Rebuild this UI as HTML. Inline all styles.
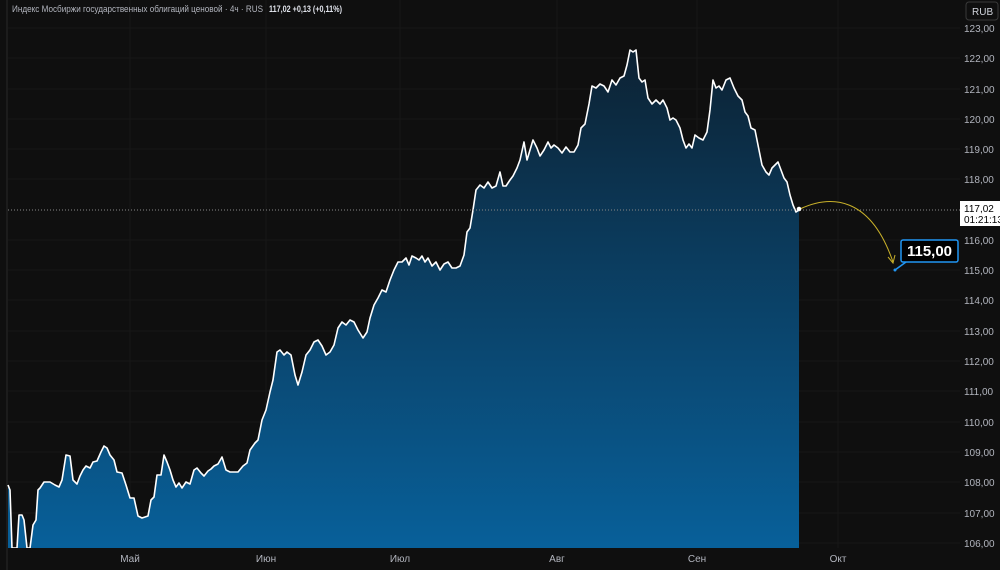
<!DOCTYPE html>
<html><head><meta charset="utf-8"><style>
body{margin:0;background:#0f0f0f;width:1000px;height:570px;overflow:hidden;font-family:"Liberation Sans",sans-serif}
svg{position:absolute;left:0;top:0}
</style></head><body>
<svg width="1000" height="570" viewBox="0 0 1000 570">
<defs><linearGradient id="g" x1="0" y1="0" x2="0" y2="1">
<stop offset="0" stop-color="#0d2233"/><stop offset="1" stop-color="#08609a"/></linearGradient></defs>
<rect x="0" y="0" width="1000" height="570" fill="#0f0f0f"/>
<rect x="6.5" y="0" width="1" height="570" fill="#2a2a2a"/>
<g stroke="#171717" stroke-width="1">
<line x1="8" y1="28" x2="960" y2="28"/><line x1="8" y1="58" x2="960" y2="58"/><line x1="8" y1="89" x2="960" y2="89"/><line x1="8" y1="119" x2="960" y2="119"/><line x1="8" y1="149" x2="960" y2="149"/><line x1="8" y1="179" x2="960" y2="179"/><line x1="8" y1="240" x2="960" y2="240"/><line x1="8" y1="270" x2="960" y2="270"/><line x1="8" y1="300" x2="960" y2="300"/><line x1="8" y1="331" x2="960" y2="331"/><line x1="8" y1="361" x2="960" y2="361"/><line x1="8" y1="391" x2="960" y2="391"/><line x1="8" y1="422" x2="960" y2="422"/><line x1="8" y1="452" x2="960" y2="452"/><line x1="8" y1="482" x2="960" y2="482"/><line x1="8" y1="513" x2="960" y2="513"/><line x1="8" y1="543" x2="960" y2="543"/>
<line x1="130" y1="0" x2="130" y2="548"/><line x1="266" y1="0" x2="266" y2="548"/><line x1="400" y1="0" x2="400" y2="548"/><line x1="557" y1="0" x2="557" y2="548"/><line x1="697" y1="0" x2="697" y2="548"/><line x1="838" y1="0" x2="838" y2="548"/>
</g>
<polygon fill="url(#g)" points="8,548 8,485 10,490 12,548 17,548 19,515 22,515 24,520 27,548 30,548 33,525 36,520 38,490 40,488 44,482 50,482 55,485 59,487 62,480 66,455 70,456 73,480 77,484 80,476 83,470 86,466 90,468 93,462 97,461 101,452 104,446 107,448 110,455 114,460 117,472 122,473 126,485 130,498 134,498 138,516 142,518 148,516 151,500 154,497 157,475 161,475 164,455 167,462 170,470 173,480 176,487 179,483 182,488 186,482 190,484 194,470 197,468 201,473 204,476 208,471 211,469 214,466 218,464 222,457 226,470 230,472 238,472 243,466 247,463 250,450 255,443 258,440 262,420 266,410 270,392 273,380 277,352 280,350 284,355 287,352 291,355 295,375 298,385 302,372 306,355 310,350 314,342 318,340 322,346 326,355 330,352 334,345 338,328 342,322 346,325 350,320 354,322 358,330 363,338 367,332 370,318 374,305 378,298 382,290 386,292 390,280 394,270 398,262 402,262 406,258 409,265 412,256 416,258 419,260 422,256 425,262 428,258 432,266 436,262 440,270 444,264 448,262 452,268 456,268 460,266 464,255 467,232 470,228 473,210 476,190 480,185 484,188 488,182 492,188 496,186 500,172 503,186 506,186 510,180 513,176 517,168 520,160 524,142 527,160 530,150 533,140 537,148 540,156 544,150 548,142 551,148 554,145 558,148 562,153 566,147 570,152 574,152 578,145 581,128 585,124 589,104 592,86 596,88 600,84 604,86 608,92 612,80 616,85 620,78 624,76 627,65 630,50 633,52 636,50 639,78 642,82 645,80 648,98 652,104 656,100 660,104 663,100 667,108 670,120 673,118 676,120 680,128 683,140 686,148 689,144 692,148 695,135 699,138 703,140 707,132 710,110 713,80 716,88 719,86 722,90 726,80 730,78 734,88 738,96 742,100 745,112 748,116 751,128 755,130 759,150 762,165 766,172 769,175 772,168 775,165 778,162 781,170 784,178 787,182 790,195 793,205 796,212 799,210 799,548"/>
<polyline fill="none" stroke="#fff" stroke-width="1.6" stroke-linejoin="round" points="8,485 10,490 12,548 17,548 19,515 22,515 24,520 27,548 30,548 33,525 36,520 38,490 40,488 44,482 50,482 55,485 59,487 62,480 66,455 70,456 73,480 77,484 80,476 83,470 86,466 90,468 93,462 97,461 101,452 104,446 107,448 110,455 114,460 117,472 122,473 126,485 130,498 134,498 138,516 142,518 148,516 151,500 154,497 157,475 161,475 164,455 167,462 170,470 173,480 176,487 179,483 182,488 186,482 190,484 194,470 197,468 201,473 204,476 208,471 211,469 214,466 218,464 222,457 226,470 230,472 238,472 243,466 247,463 250,450 255,443 258,440 262,420 266,410 270,392 273,380 277,352 280,350 284,355 287,352 291,355 295,375 298,385 302,372 306,355 310,350 314,342 318,340 322,346 326,355 330,352 334,345 338,328 342,322 346,325 350,320 354,322 358,330 363,338 367,332 370,318 374,305 378,298 382,290 386,292 390,280 394,270 398,262 402,262 406,258 409,265 412,256 416,258 419,260 422,256 425,262 428,258 432,266 436,262 440,270 444,264 448,262 452,268 456,268 460,266 464,255 467,232 470,228 473,210 476,190 480,185 484,188 488,182 492,188 496,186 500,172 503,186 506,186 510,180 513,176 517,168 520,160 524,142 527,160 530,150 533,140 537,148 540,156 544,150 548,142 551,148 554,145 558,148 562,153 566,147 570,152 574,152 578,145 581,128 585,124 589,104 592,86 596,88 600,84 604,86 608,92 612,80 616,85 620,78 624,76 627,65 630,50 633,52 636,50 639,78 642,82 645,80 648,98 652,104 656,100 660,104 663,100 667,108 670,120 673,118 676,120 680,128 683,140 686,148 689,144 692,148 695,135 699,138 703,140 707,132 710,110 713,80 716,88 719,86 722,90 726,80 730,78 734,88 738,96 742,100 745,112 748,116 751,128 755,130 759,150 762,165 766,172 769,175 772,168 775,165 778,162 781,170 784,178 787,182 790,195 793,205 796,212 799,210"/>
<line x1="8" y1="210" x2="960" y2="210" stroke="#888" stroke-width="1" stroke-dasharray="1,2"/>
<rect x="0" y="548" width="1000" height="22" fill="#0f0f0f"/>
<rect x="6.5" y="548" width="1" height="22" fill="#2a2a2a"/>
<path d="M800,209 C830,195 870,195 893,262" fill="none" stroke="#c9b12a" stroke-width="1"/>
<path d="M888,257 L893,263 L895,255" fill="none" stroke="#c9b12a" stroke-width="1"/>
<circle cx="799" cy="209" r="2.3" fill="#fff"/>
<line x1="895" y1="270" x2="906" y2="262" stroke="#2196f3" stroke-width="1.5"/>
<circle cx="895" cy="270" r="1.5" fill="#2196f3"/>
<rect x="901" y="240" width="57" height="22" rx="2" fill="#000" stroke="#2196f3" stroke-width="1.5"/>
<text x="929.5" y="256" fill="#fff" font-size="15" font-weight="bold" text-anchor="middle">115,00</text>
<rect x="960" y="201" width="40" height="25" fill="#fff"/>
<text x="964" y="212" fill="#000" font-size="10">117,02</text>
<text x="964" y="223" fill="#000" font-size="10">01:21:13</text>
<rect x="966" y="2" width="32" height="18" rx="3" fill="#0f0f0f" stroke="#3a3a3a"/>
<text x="972" y="15" fill="#d1d4dc" font-size="10">RUB</text>
<g fill="#b2b5be" font-size="10">
<text x="964" y="32">123,00</text><text x="964" y="62">122,00</text><text x="964" y="93">121,00</text><text x="964" y="123">120,00</text><text x="964" y="153">119,00</text><text x="964" y="183">118,00</text><text x="964" y="244">116,00</text><text x="964" y="274">115,00</text><text x="964" y="304">114,00</text><text x="964" y="335">113,00</text><text x="964" y="365">112,00</text><text x="964" y="395">111,00</text><text x="964" y="426">110,00</text><text x="964" y="456">109,00</text><text x="964" y="486">108,00</text><text x="964" y="517">107,00</text><text x="964" y="547">106,00</text>
<text x="130" y="562" text-anchor="middle">Май</text><text x="266" y="562" text-anchor="middle">Июн</text><text x="400" y="562" text-anchor="middle">Июл</text><text x="557" y="562" text-anchor="middle">Авг</text><text x="697" y="562" text-anchor="middle">Сен</text><text x="838" y="562" text-anchor="middle">Окт</text>
</g>
<text x="12" y="12" fill="#b2b5be" font-size="9" textLength="251" lengthAdjust="spacingAndGlyphs">Индекс Мосбиржи государственных облигаций ценовой · 4ч · RUS</text>
<text x="269" y="12" fill="#e0e3eb" font-size="9" font-weight="bold" textLength="73" lengthAdjust="spacingAndGlyphs">117,02  +0,13 (+0,11%)</text>
</svg>
</body></html>
